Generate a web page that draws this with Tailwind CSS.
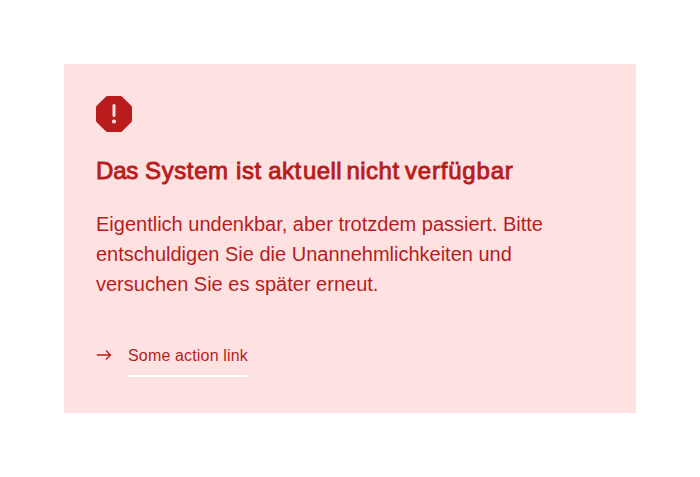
<!DOCTYPE html>
<html lang="de">
<head>
<meta charset="utf-8">
<title>Systemfehler</title>
<script src="https://cdn.jsdelivr.net/npm/@tailwindcss/browser@4"></script>
</head>
<body class="bg-white p-16 font-['Liberation_Sans',Arial,sans-serif] text-[#b91c1c]">
<main class="flex h-[349px] w-[572px] flex-col items-start bg-[#fee2e2] p-8">
<svg class="size-9" viewBox="0 0 36 36" fill="none"><path d="M11.5 0h13q1 0 1.7.7l9.1 9.1q.7.7.7 1.7v13q0 1-.7 1.7l-9.1 9.1q-.7.7-1.7.7h-13q-1 0-1.7-.7L.7 26.2Q0 25.500 0 24.500v-13q0-1 .7-1.700L9.800.7Q10.500 0 11.500 0z" fill="#b91c1c"/><path d="M18 9.500v10" stroke="#fee2e2" stroke-width="3" stroke-linecap="round"/><circle cx="18" cy="25.500" r="2.100" fill="#fee2e2"/></svg>
<h1 class="mt-6 text-2xl leading-[30px] font-normal whitespace-nowrap [-webkit-text-stroke:0.9px_#b91c1c]"><span class="tracking-[-0.2px]">Das</span> <span class="ml-[0.3px] tracking-[0.6px]">System</span> <span class="ml-[0.6px] tracking-[0.6px]">ist</span> <span class="-ml-[0.2px] tracking-[0.4px]">ak<span class="tracking-[2px]">t</span>uell</span> <span class="-ml-[2.3px] tracking-[0.5px]">nicht</span> <span class="-ml-[1.3px] tracking-[0.8px]">verfügbar</span></h1>
<p class="mt-[23px] w-[480px] text-xl leading-[30px]">Eigentlich undenkbar, aber trotzdem passiert. Bitte entschuldigen Sie die Unannehmlichkeiten und versuchen Sie es später erneut.</p>
<a href="#" class="mt-9 flex items-start gap-4 text-base tracking-[0.01em]"><svg class="mt-3 size-4" viewBox="0 0 16 16" fill="none" stroke="currentColor" stroke-width="1.3"><path d="M.8 8h14M10 3.500L14.500 8l-4.500 4.500"/></svg><span class="border-b-2 border-white pt-[9px] pb-[7px]">Some action link</span></a>
</main>
</body>
</html>
